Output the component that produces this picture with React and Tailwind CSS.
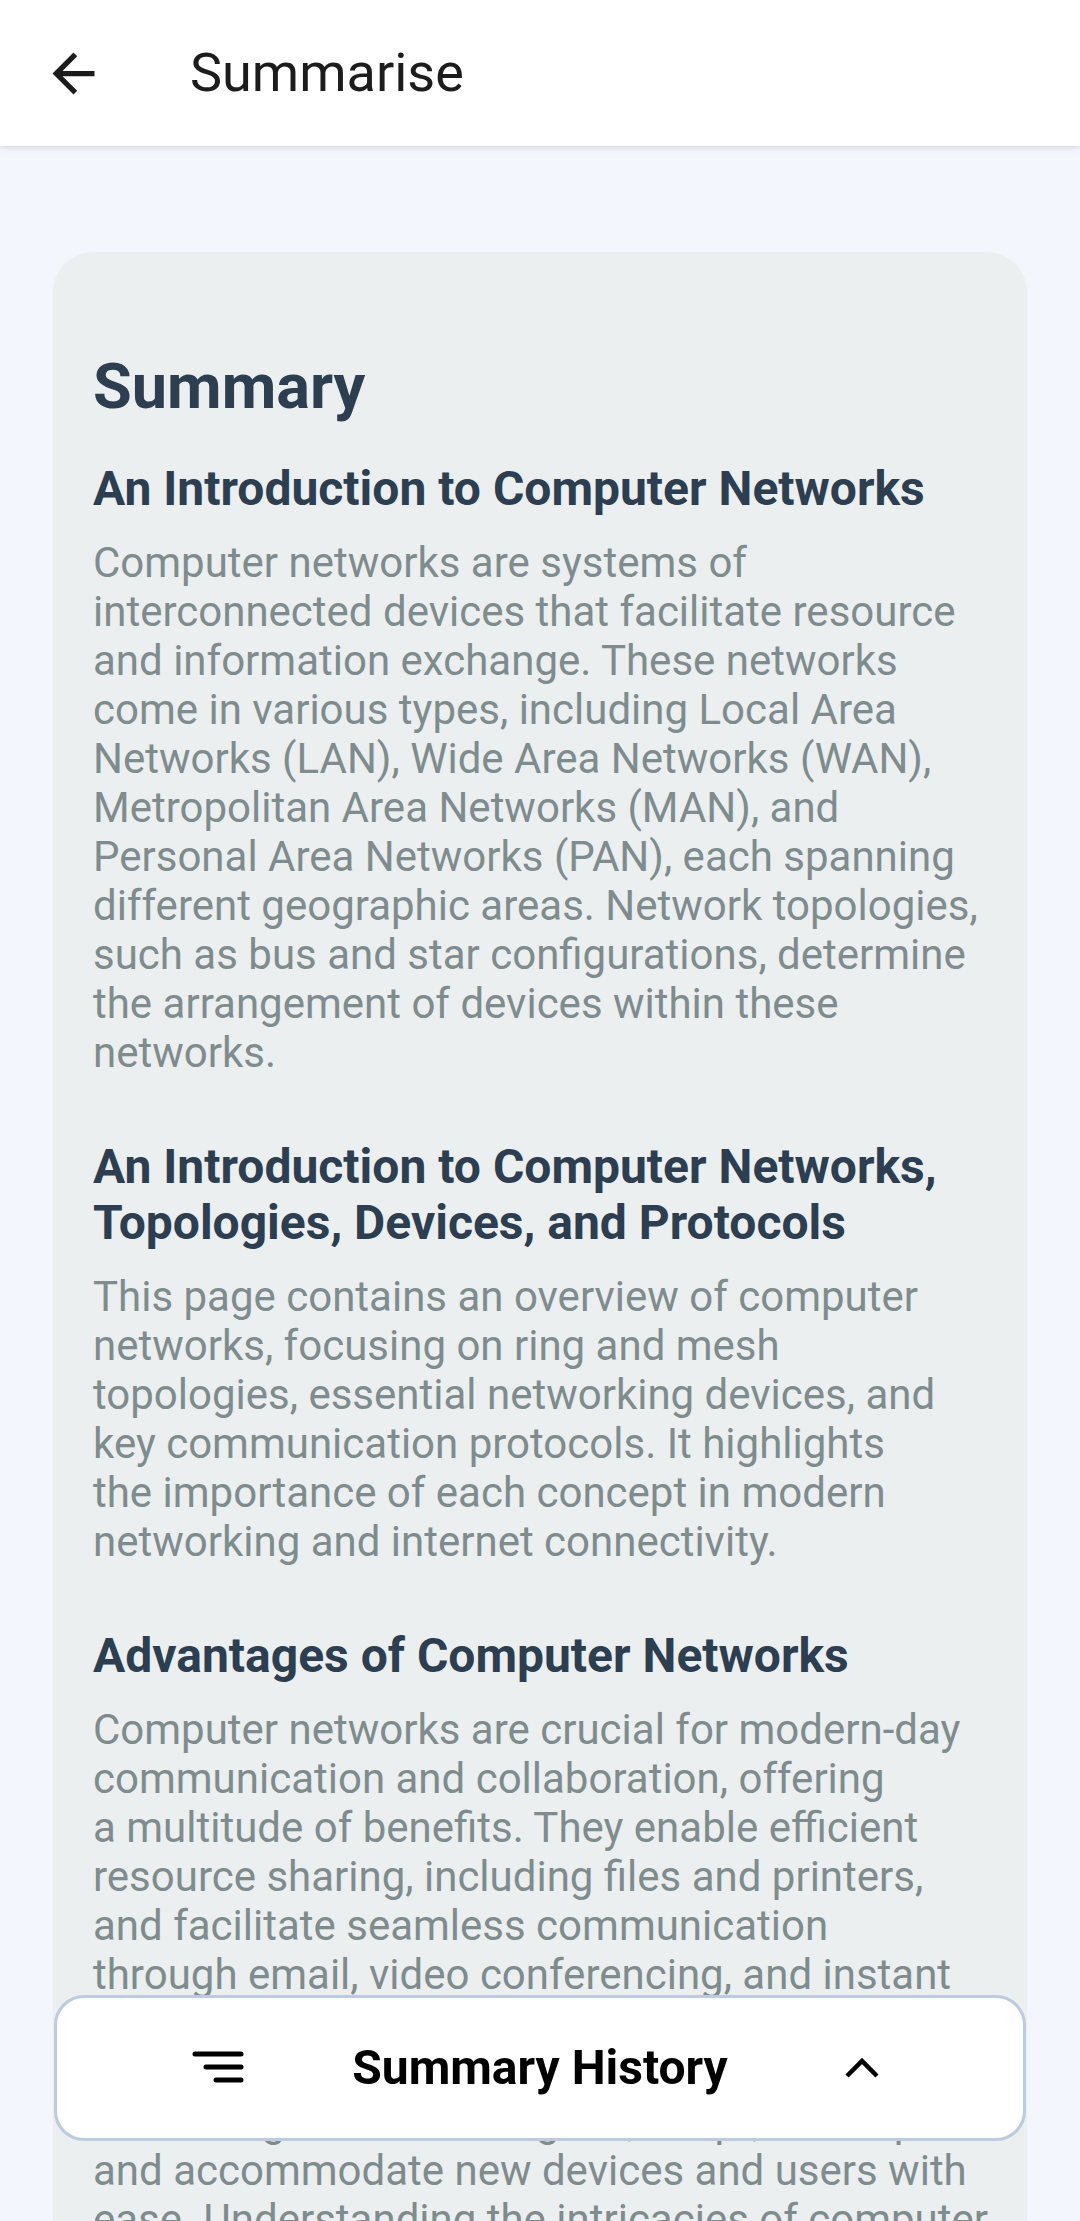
import React from 'react';

const sections = [
  {
    title: ['An Introduction to Computer Networks'],
    lines: [
      'Computer networks are systems of',
      'interconnected devices that facilitate resource',
      'and information exchange. These networks',
      'come in various types, including Local Area',
      'Networks (LAN), Wide Area Networks (WAN),',
      'Metropolitan Area Networks (MAN), and',
      'Personal Area Networks (PAN), each spanning',
      'different geographic areas. Network topologies,',
      'such as bus and star configurations, determine',
      'the arrangement of devices within these',
      'networks.',
    ],
  },
  {
    title: ['An Introduction to Computer Networks,', 'Topologies, Devices, and Protocols'],
    lines: [
      'This page contains an overview of computer',
      'networks, focusing on ring and mesh',
      'topologies, essential networking devices, and',
      'key communication protocols. It highlights',
      'the importance of each concept in modern',
      'networking and internet connectivity.',
    ],
  },
  {
    title: ['Advantages of Computer Networks'],
    lines: [
      'Computer networks are crucial for modern-day',
      'communication and collaboration, offering',
      'a multitude of benefits. They enable efficient',
      'resource sharing, including files and printers,',
      'and facilitate seamless communication',
      'through email, video conferencing, and instant',
      'messaging. Moreover, networks enhance data',
      'security and reliability, while their scalability',
      'allows organizations to grow, adapt, and expand',
      'and accommodate new devices and users with',
      'ease. Understanding the intricacies of computer',
      'networks is essential in today\'s digital world.',
    ],
  },
];

const App = () => {
  return (
    <div
      className="relative h-screen overflow-hidden bg-[#f3f6fc]"
      style={{ fontFamily: 'Roboto, "Noto Sans", sans-serif' }}
    >
      {/* top bar */}
      <header className="relative z-10 flex h-[146px] items-center bg-white shadow-[0_2px_6px_rgba(0,0,0,0.12)]">
        <button className="ml-[42px] flex h-[63px] w-[63px] items-center justify-center text-[#1c1c1c]">
          <svg width="63" height="63" viewBox="0 0 24 24" fill="currentColor">
            <path d="M20 11H7.83l5.59-5.59L12 4l-8 8 8 8 1.41-1.41L7.83 13H20v-2z" />
          </svg>
        </button>
        <h1 className="ml-[85px] text-[54px] leading-none text-[#1c1c1c]">Summarise</h1>
      </header>

      {/* summary card */}
      <main className="px-[53px] pt-[106px]">
        <div className="rounded-[40px] bg-[#ebeff0] pl-[40px] pr-[30px] pt-[98px] pb-[200px]">
          <h2 className="text-[63px] font-bold leading-[74px] text-[#2c3e50]">Summary</h2>
          <div className="mt-[37px] flex flex-col gap-[62px]">
            {sections.map((s, i) => (
              <section key={i}>
                <h3 className="text-[48px] font-bold leading-[56px] text-[#2c3e50]">
                  {s.title.map((t, j) => (
                    <span key={j} className="block whitespace-nowrap">{t}</span>
                  ))}
                </h3>
                <p className="mt-[21px] text-[42px] leading-[49px] text-[#7f8c8d]">
                  {s.lines.map((l, j) => (
                    <span key={j} className="block whitespace-nowrap">{l}</span>
                  ))}
                </p>
              </section>
            ))}
          </div>
        </div>
      </main>

      {/* history bar */}
      <div className="fixed bottom-[80px] left-[54px] right-[54px] z-20 grid h-[146px] grid-cols-3 items-center rounded-[30px] border-[3px] border-[#bccbe0] bg-white">
        <div className="flex justify-center">
          <svg width="52" height="40" viewBox="0 0 52 40" stroke="#000" strokeWidth="5" strokeLinecap="round">
            <line x1="3" y1="6" x2="49" y2="6" />
            <line x1="14" y1="19" x2="49" y2="19" />
            <line x1="24" y1="32" x2="49" y2="32" />
          </svg>
        </div>
        <div className="flex justify-center">
          <span className="whitespace-nowrap text-[48px] font-bold text-black">Summary History</span>
        </div>
        <div className="flex justify-center">
          <svg width="36" height="24" viewBox="0 0 36 24" fill="none" stroke="#000" strokeWidth="4.5">
            <polyline points="3,20 18,5 33,20" />
          </svg>
        </div>
      </div>
    </div>
  );
};

export default App;
